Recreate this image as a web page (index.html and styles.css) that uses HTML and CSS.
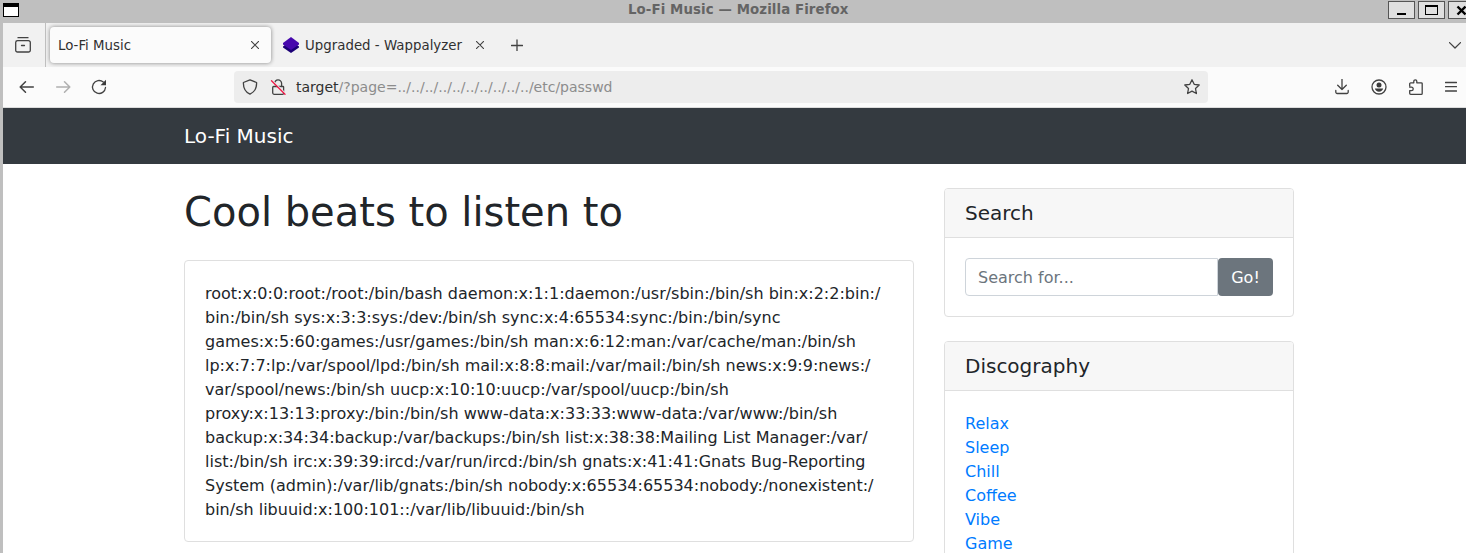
FILE: index.html
```html
<!DOCTYPE html>
<html lang="en">
<head>
<meta charset="utf-8">
<title>Lo-Fi Music</title>
<link rel="stylesheet" href="styles.css">
</head>
<body>
<header class="titlebar">
  <svg class="window-menu" width="16" height="14" viewBox="0 0 16 14"><rect width="16" height="14" fill="#000"/><rect x="1" y="4" width="14" height="9" fill="#fff"/></svg>
  <span class="window-title">Lo-Fi Music — Mozilla Firefox</span>
  <div class="window-buttons">
    <button class="window-button" aria-label="Minimize"><svg width="25" height="16" viewBox="0 0 25 16"><path d="M8 11h9v2H8z"/></svg></button>
    <button class="window-button" aria-label="Maximize"><svg width="25" height="16" viewBox="0 0 25 16"><path fill-rule="evenodd" d="M6 3h13v10H6zM7 5v7h11V5z"/></svg></button>
    <button class="window-button" aria-label="Close"><svg width="25" height="16" viewBox="0 0 25 16"><path d="M8.500 4.500l8 8M16.500 4.500l-8 8" stroke="#000" stroke-width="2.400"/></svg></button>
  </div>
</header>
<div class="browser">
  <nav class="tabstrip">
    <div class="firefox-view">
      <svg class="icon" width="16" height="16" viewBox="0 0 16 16"><path d="M3 .7h10M2.500 3.700h11a1.800 1.800 0 0 1 1.800 1.800v7.700a1.800 1.800 0 0 1-1.800 1.800h-11a1.800 1.800 0 0 1-1.800-1.800V5.500a1.800 1.800 0 0 1 1.800-1.800zM6.500 8.500h3"/></svg>
    </div>
    <div class="tab tab-active">
      <span class="tab-label">Lo-Fi Music</span>
      <svg class="icon tab-close" width="8" height="8" viewBox="0 0 8 8"><path d="M.3.3l7.400 7.400M7.700.3L.3 7.700"/></svg>
    </div>
    <div class="tab tab-second">
      <svg width="16" height="16" viewBox="0 0 16 16"><path fill="#1b0076" d="M0 9.500l2-1.500h12l2 1.500v1L8 16l-8-5.500z"/><path fill="#4608ad" d="M8 0l8 6v1.500L8 13 0 7.500V6z"/></svg>
      <span class="tab-label label-second">Upgraded - Wappalyzer</span>
      <svg class="icon tab-close" width="8" height="8" viewBox="0 0 8 8"><path d="M.3.3l7.400 7.400M7.700.3L.3 7.700"/></svg>
    </div>
    <svg class="icon new-tab" width="12" height="12" viewBox="0 0 12 12"><path d="M.5 6.500h11M6 1v11"/></svg>
    <svg class="icon all-tabs" width="12" height="7" viewBox="0 0 12 7"><path d="M.5.600L6 6 11.500.600"/></svg>
  </nav>
  <div class="toolbar">
    <div class="nav-buttons">
      <svg class="icon arrow" width="16" height="16" viewBox="0 0 16 16"><path d="M14.300 8H1.500M6.500 2.700L1.200 8l5.300 5.300"/></svg>
      <svg class="icon arrow faded" width="16" height="16" viewBox="0 0 16 16"><path d="M1.700 8h12.800M9.500 2.700L14.800 8l-5.300 5.300"/></svg>
      <svg class="icon" width="16" height="16" viewBox="0 0 16 16"><path d="M12.300 3.100A6.500 6.500 0 1 0 14.500 8.500"/><path class="solid" d="M15 .8v5.500H9.500z"/></svg>
    </div>
    <div class="urlbar">
      <svg class="icon" width="16" height="16" viewBox="0 0 16 16"><path d="M8 .8l6.600 2.700C14.800 9 12.500 13 8 15.200 3.500 13 1.200 9 1.400 3.500z"/></svg>
      <svg class="icon lock" width="16" height="16" viewBox="0 0 16 16"><path d="M4.600 4.500a3.500 3.500 0 0 1 7-.2V7M4 7.500h9a.6.600 0 0 1 .6.600v6.200a1 1 0 0 1-1 1H4.200a1.500 1.500 0 0 1-1.500-1.500V8.500a1 1 0 0 1 1-1z"/><path class="lock-gap" d="M2 1l14 14"/><path class="lock-slash" d="M1.500 1.800L15 15.300"/></svg>
      <span class="url"><span class="host">target</span>/?page=../../../../../../../../../../etc/passwd</span>
      <svg class="icon star" width="16" height="16" viewBox="0 0 16 16"><path d="M8 .8l2.200 4.500 5 .7-3.700 3.500.9 5-4.400-2.400-4.400 2.400.9-5L.8 6l5-.7z"/></svg>
    </div>
    <div class="actions">
      <svg class="icon" width="16" height="16" viewBox="0 0 16 16"><path d="M8 0v10.500M3.700 6.200L8 10.500l4.300-4.300M1.800 11.500v1.600a1.400 1.400 0 0 0 1.400 1.400h9.600a1.400 1.400 0 0 0 1.400-1.400v-1.600"/></svg>
      <svg class="icon" width="16" height="16" viewBox="0 0 16 16"><circle cx="8" cy="8" r="7"/><circle class="solid" cx="8" cy="6" r="2.500"/><path class="solid" d="M3.800 9.600h8.400c-.5 2-2.200 3.200-4.200 3.200s-3.700-1.200-4.200-3.200z"/></svg>
      <svg class="icon" width="16" height="16" viewBox="0 0 16 16"><path d="M1.700 7V4.800a1 1 0 0 1 1-1h3.100V2.300a1.500 1.500 0 0 1 3 0v1.500h4.500a.9.900 0 0 1 .9.900v9.700a.9.900 0 0 1-.9.900H2.700a1 1 0 0 1-1-1v-2.700h1.800a1.700 1.700 0 0 0 0-3.400H1.700"/></svg>
      <svg class="icon" width="12" height="16" viewBox="0 0 12 16"><path d="M.5 3.500h11M.5 7.700h11M.5 12h11"/></svg>
    </div>
  </div>
  <div class="page">
    <nav class="navbar"><a class="brand">Lo-Fi Music</a></nav>
    <div class="container">
      <main class="main">
        <h1 class="heading">Cool beats to listen to</h1>
        <div class="card card-body">
          root:x:0:0:root:/root:/bin/bash daemon:x:1:1:daemon:/usr/sbin:/bin/sh bin:x:2:2:bin:/<br>bin:/bin/sh sys:x:3:3:sys:/dev:/bin/sh sync:x:4:65534:sync:/bin:/bin/sync<br>games:x:5:60:games:/usr/games:/bin/sh man:x:6:12:man:/var/cache/man:/bin/sh<br>lp:x:7:7:lp:/var/spool/lpd:/bin/sh mail:x:8:8:mail:/var/mail:/bin/sh news:x:9:9:news:/<br>var/spool/news:/bin/sh uucp:x:10:10:uucp:/var/spool/uucp:/bin/sh<br>proxy:x:13:13:proxy:/bin:/bin/sh www-data:x:33:33:www-data:/var/www:/bin/sh<br>backup:x:34:34:backup:/var/backups:/bin/sh list:x:38:38:Mailing List Manager:/var/<br>list:/bin/sh irc:x:39:39:ircd:/var/run/ircd:/bin/sh gnats:x:41:41:Gnats Bug-Reporting<br>System (admin):/var/lib/gnats:/bin/sh nobody:x:65534:65534:nobody:/nonexistent:/<br>bin/sh libuuid:x:100:101::/var/lib/libuuid:/bin/sh
        </div>
      </main>
      <aside class="sidebar">
        <section class="card">
          <h5 class="card-header">Search</h5>
          <div class="card-body search">
            <input class="search-input" type="text" placeholder="Search for...">
            <button class="go">Go!</button>
          </div>
        </section>
        <section class="card">
          <h5 class="card-header">Discography</h5>
          <ul class="card-body links">
            <li><a>Relax</a></li>
            <li><a>Sleep</a></li>
            <li><a>Chill</a></li>
            <li><a>Coffee</a></li>
            <li><a>Vibe</a></li>
            <li><a>Game</a></li>
          </ul>
        </section>
      </aside>
    </div>
  </div>
</div>
</body>
</html>
```
FILE: styles.css
```css
* { box-sizing: border-box; }
body {
  margin: 0;
  height: 553px;
  overflow: hidden;
  background: #bfbfbf;
  font: 16px/24px "DejaVu Sans", sans-serif;
  color: #212529;
}
svg { display: block; flex: none; }
.icon { fill: none; stroke: #424242; stroke-width: 1.3; stroke-linecap: round; stroke-linejoin: round; }
.icon .solid { fill: #3b3b3b; stroke: none; }
.arrow { stroke-width: 1.5; }
.faded { opacity: .4; }

/* Window frame */
.titlebar { display: flex; align-items: flex-start; height: 23px; padding-left: 3px; }
.window-menu { margin-top: 3px; }
.window-title { margin-left: 609px; font-size: 13.333px; font-weight: bold; letter-spacing: .1px; line-height: 19px; color: #646464; white-space: nowrap; }
.window-buttons { display: flex; gap: 3px; margin: 1px -9px 0 auto; }
.window-button { flex: none; width: 27px; height: 18px; padding: 0; border: 1px solid #555; background: #dfdfdf; }
.browser { margin-left: 3px; background: #fff; }

/* Tabs */
.tabstrip { display: flex; align-items: center; height: 44px; background: #f1f1f1; font-size: 13.333px; color: #303030; }
.firefox-view { display: flex; align-items: center; width: 43px; height: 44px; padding-left: 12px; border-right: 1px solid #bfbfbf; }
.tab { display: flex; align-items: center; height: 36px; white-space: nowrap; }
.tab .tab-close { margin-left: auto; stroke-width: 1.1; }
.tab-label { padding-top: 2px; }
.tab-active { width: 221px; margin-left: 4px; padding: 0 12px 0 8px; border-radius: 4px; background: #fbfbfb; box-shadow: 0 0 4px rgba(0, 0, 0, .45); }
.tab-second { width: 213px; margin-left: 9px; padding: 0 9px 0 3px; }
.label-second { margin-left: 6px; letter-spacing: .02px; }
.new-tab { margin-left: 18px; }
.all-tabs { margin: 0 5px 0 auto; }

/* Navigation toolbar */
.toolbar { display: flex; align-items: center; height: 41px; border-bottom: 1px solid #dcdcdc; background: #fbfbfb; }
.nav-buttons { display: flex; gap: 20px; padding-left: 16px; }
.urlbar { display: flex; align-items: center; width: 974px; height: 32px; margin-left: 127px; padding: 0 8px; border-radius: 4px; background: #ededed; font-size: 14px; }
.lock { margin-left: 12px; }
.lock-gap { stroke: #ededed; }
.lock-slash { stroke: #f01a48; }
.url { margin-left: 10px; color: #8c8c8c; white-space: nowrap; }
.host { color: #303030; }
.star { margin-left: auto; }
.actions { display: flex; gap: 21px; margin: 0 9px 0 auto; }

/* Page */
.navbar { height: 56px; padding: 13px 181px; background: #343a40; }
.brand { display: block; font-size: 20px; line-height: 30px; color: #fff; }
.container { display: flex; gap: 30px; padding: 24px 0 0 181px; }
.main { width: 730px; }
.heading { margin: 0 0 24px; font-size: 40px; font-weight: 400; line-height: 48px; }
.card { border: 1px solid #dfdfdf; border-radius: 4px; background: #fff; }
.card-body { padding: 21px 20px 19px; white-space: nowrap; }
.sidebar { display: flex; flex-direction: column; gap: 24px; width: 350px; }
.card-header { margin: 0; padding: 12px 20px; border-bottom: 1px solid #dfdfdf; background: #f7f7f7; border-radius: 3px 3px 0 0; font-size: 20px; font-weight: 400; line-height: 24px; }
.search { display: flex; padding: 20px; }
.search-input { flex: 1; min-width: 0; height: 38px; padding: 6px 12px; border: 1px solid #ced4da; border-radius: 4px 0 0 4px; font: inherit; }
.search-input::placeholder { color: #6c757d; opacity: 1; }
.go { width: 55px; height: 38px; padding: 2px 0 0; border: 0; border-radius: 4px; background: #6c757d; color: #fff; font: inherit; }
.links { margin: 0; list-style: none; color: #007bff; }
```
